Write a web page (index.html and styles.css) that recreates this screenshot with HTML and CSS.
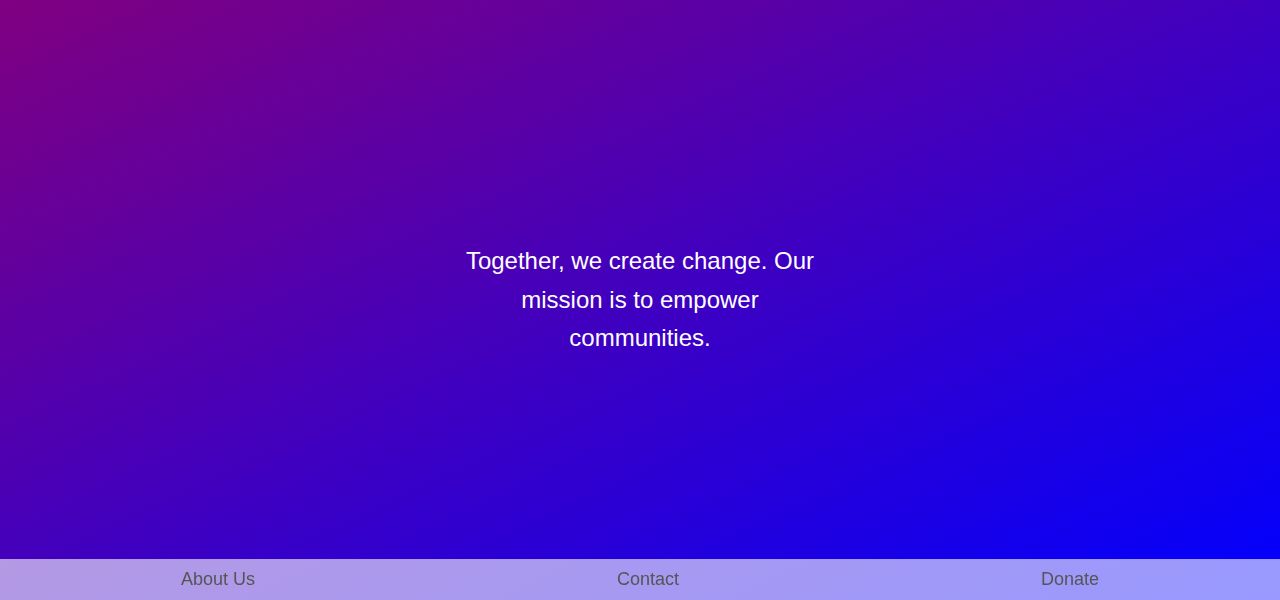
FILE: index.html
```html
<!DOCTYPE html>
<html lang="en">
<head>
<meta charset="utf-8">
<title>Mission</title>
<link rel="stylesheet" href="styles.css">
</head>
<body>
<main class="hero">
  <p class="mission">Together, we create change. Our mission is to empower communities.</p>
</main>
<footer class="footer">
  <a class="footer-link" href="#">About Us</a>
  <a class="footer-link" href="#">Contact</a>
  <a class="footer-link" href="#">Donate</a>
</footer>
</body>
</html>
```

FILE: styles.css
```css
html, body {
  margin: 0;
  padding: 0;
}
body {
  height: 100vh;
  background: linear-gradient(to bottom right, #800080, #0000ff);
  font-family: "Liberation Sans", Arial, sans-serif;
  overflow: hidden;
}
.hero {
  height: 100vh;
  display: flex;
  align-items: center;
  justify-content: center;
}
.mission {
  margin: 0;
  max-width: 360px;
  text-align: center;
  color: #ffffff;
  font-size: 24px;
  line-height: 1.6;
}
.footer {
  position: fixed;
  left: 0;
  right: 0;
  bottom: 0;
  display: flex;
  justify-content: space-around;
  padding: 10px 0;
  background: rgba(255, 255, 255, 0.6);
}
.footer-link {
  color: #555555;
  text-decoration: none;
  font-size: 18px;
}
```
